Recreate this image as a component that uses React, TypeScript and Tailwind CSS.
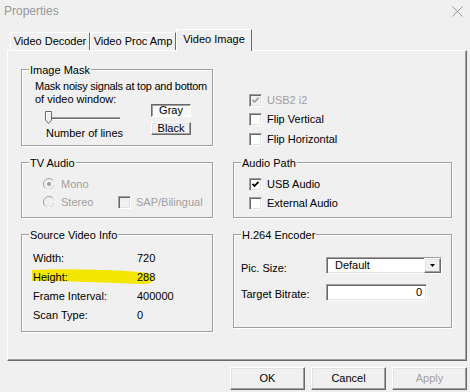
import type { ReactNode } from "react";

const raised =
  "border border-t-white border-l-white border-r-[#696969] border-b-[#696969] shadow-[inset_-1px_-1px_0_#a0a0a0,inset_1px_1px_0_#e3e3e3]";
const sunken =
  "border border-t-[#a0a0a0] border-l-[#a0a0a0] border-r-white border-b-white shadow-[inset_1px_1px_0_#696969,inset_-1px_-1px_0_#e3e3e3]";

function Group({ label, className, children }: { label: string; className: string; children: ReactNode }) {
  return (
    <div className={"relative border border-[#a0a0a0] shadow-[inset_1px_1px_0_#fff,1px_1px_0_#fff] " + className}>
      <span className="absolute -top-[6px] left-[7px] bg-[#f0f0f0] px-[1px]">{label}</span>
      {children}
    </div>
  );
}

function Check({ checked, disabled }: { checked?: boolean; disabled?: boolean }) {
  return (
    <span
      className={
        "flex h-[13px] w-[13px] shrink-0 items-center justify-center " +
        sunken +
        (disabled ? " bg-[#f0f0f0]" : " bg-white")
      }
    >
      {checked && (
        <svg width="9" height="9" viewBox="0 0 9 9">
          <polyline
            points="1.5,3.8 3.5,6 7.5,1.8"
            fill="none"
            stroke={disabled ? "#a0a0a0" : "#000"}
            strokeWidth="1.8"
          />
        </svg>
      )}
    </span>
  );
}

function Radio({ checked }: { checked?: boolean }) {
  return (
    <svg width="12" height="12" viewBox="0 0 12 12" className="shrink-0">
      <circle cx="6" cy="6" r="5.5" fill="#f0f0f0" stroke="#a0a0a0" />
      <path d="M10 2.2 A5.5 5.5 0 0 1 2.2 10" fill="none" stroke="#fff" />
      {checked && <circle cx="6" cy="6" r="2" fill="#a0a0a0" />}
    </svg>
  );
}

function CheckRow({ text, checked, disabled }: { text: string; checked?: boolean; disabled?: boolean }) {
  return (
    <div className="flex h-[14px] items-center gap-[5px]">
      <Check checked={checked} disabled={disabled} />
      <span className={disabled ? "text-[#a0a0a0]" : ""}>{text}</span>
    </div>
  );
}

export default function App() {
  return (
    <div className="flex h-[392px] w-[470px] flex-col overflow-hidden whitespace-nowrap bg-[#f0f0f0] font-['Liberation_Sans',Arial,sans-serif] text-[11px] leading-[13px] text-black">
      {/* title bar */}
      <div className="flex h-[22px] shrink-0 items-center justify-between pl-[4px] pr-[7px]">
        <span className="text-[12px] text-[#999]">Properties</span>
        <svg width="11" height="11" viewBox="0 0 11 11">
          <path d="M0.5 0.5 L10.5 10.5 M10.5 0.5 L0.5 10.5" stroke="#999" strokeWidth="1" />
        </svg>
      </div>

      <div className="flex flex-col pl-[7px] pr-[3px] pt-[7px]">
        {/* tabs */}
        <div className="flex h-[21px] items-end pl-[3px]">
          <div className="flex h-[18px] w-[80px] justify-center border border-b-0 border-t-white border-l-white border-r-[#696969] pt-[2px]">
            Video Decoder
          </div>
          <div className="flex h-[18px] w-[86px] justify-center border border-b-0 border-t-white border-l-white border-r-[#696969] pt-[2px]">
            Video Proc Amp
          </div>
          <div className="relative z-10 -mb-[1px] flex h-[22px] w-[76px] justify-center border border-b-0 border-t-white border-l-white border-r-[#696969] bg-[#f0f0f0] pt-[3px]">
            Video Image
          </div>
        </div>

        {/* panel */}
        <div className="h-[311px] border border-t-white border-l-white border-r-[#696969] border-b-[#696969] pl-[13px] pt-[18px] shadow-[inset_-1px_-1px_0_#a0a0a0]">
          <div className="grid grid-cols-[192px_219px] grid-rows-[77px_56px_98px] gap-x-[20px] gap-y-[16px]">
            <Group label="Image Mask" className="">
              <div className="pl-[13px] pt-[10px]">
                <p className="tracking-[-0.25px]">Mask noisy signals at top and bottom</p>
                <p>of video window:</p>
              </div>
              <div className="-mt-[2px] flex">
                <div className="w-[129px] pl-[23px]">
                  <svg width="78" height="13" viewBox="0 0 78 13" className="mt-[7px] block">
                    <line x1="1" y1="6.5" x2="75" y2="6.5" stroke="#a0a0a0" />
                    <line x1="1" y1="7.5" x2="75" y2="7.5" stroke="#696969" />
                    <line x1="1" y1="8.5" x2="75" y2="8.5" stroke="#fff" />
                    <polygon points="0.5,0.5 6.5,0.5 6.5,9 3.5,12.5 0.5,9" fill="#f0f0f0" stroke="#696969" />
                    <polyline points="1.5,9 1.5,1.5 5.5,1.5" fill="none" stroke="#fff" />
                  </svg>
                  <p className="mt-[3px] pl-[1px]">Number of lines</p>
                </div>
                <div className="flex flex-col gap-[5px]">
                  <div className="flex h-[13px] w-[40px] items-center justify-center border border-t-[#696969] border-l-[#696969] border-r-white border-b-white bg-[#f8f8f8] leading-[11px] shadow-[inset_1px_1px_0_#a0a0a0]">
                    Gray
                  </div>
                  <div className={"flex h-[13px] w-[40px] items-center justify-center leading-[11px] " + raised}>
                    Black
                  </div>
                </div>
              </div>
            </Group>

            <div className="flex flex-col gap-[6px] pl-[16px] pt-[25px]">
              <CheckRow text="USB2 i2" checked disabled />
              <CheckRow text="Flip Vertical" />
              <CheckRow text="Flip Horizontal" />
            </div>

            <Group label="TV Audio" className="">
              <div className="flex flex-col gap-[4px] pl-[21px] pt-[14px] text-[#a0a0a0]">
                <div className="flex h-[14px] items-center gap-[6px]">
                  <Radio checked />
                  <span>Mono</span>
                </div>
                <div className="flex h-[14px] items-center">
                  <div className="flex w-[75px] items-center gap-[6px]">
                    <Radio />
                    <span>Stereo</span>
                  </div>
                  <Check disabled />
                  <span className="ml-[5px]">SAP/Bilingual</span>
                </div>
              </div>
            </Group>

            <Group label="Audio Path" className="">
              <div className="flex flex-col gap-[5px] pl-[15px] pt-[14px]">
                <CheckRow text="USB Audio" checked />
                <CheckRow text="External Audio" />
              </div>
            </Group>

            <Group label="Source Video Info" className="">
              <svg width="124" height="19" viewBox="0 0 124 19" className="absolute left-[10px] top-[33px]">
                <path
                  d="M0,2 C30,0.5 70,1 108,4 Q121,5 121,10.5 Q121,16.5 110,16 C75,14.5 35,13 0,13 Z"
                  fill="#f3e600"
                />
              </svg>
              <div className="relative pl-[11px] pt-[14px] leading-[19px]">
                {[
                  ["Width:", "720"],
                  ["Height:", "288"],
                  ["Frame Interval:", "400000"],
                  ["Scan Type:", "0"],
                ].map(([k, v]) => (
                  <div key={k} className="flex">
                    <span className="w-[104px]">{k}</span>
                    <span>{v}</span>
                  </div>
                ))}
              </div>
            </Group>

            <Group label="H.264 Encoder" className="h-[94px] self-start">
              <div className="flex flex-col gap-[9px] pl-[7px] pt-[22px]">
                <div className="flex">
                  <span className="w-[85px] pt-[5px]">Pic. Size:</span>
                  <div className={"flex h-[17px] w-[116px] bg-white " + sunken}>
                    <span className="flex-1 pl-[8px] pt-[1px]">Default</span>
                    <div className={"flex w-[17px] items-center justify-center bg-[#f0f0f0] " + raised}>
                      <svg width="5" height="3" viewBox="0 0 5 3">
                        <polygon points="0,0 5,0 2.5,3" fill="#000" />
                      </svg>
                    </div>
                  </div>
                </div>
                <div className="flex">
                  <span className="w-[85px] pt-[4px]">Target Bitrate:</span>
                  <div className={"flex h-[17px] w-[101px] items-center justify-end bg-white pr-[4px] " + sunken}>
                    0
                  </div>
                </div>
              </div>
            </Group>
          </div>
        </div>
      </div>

      {/* dialog buttons */}
      <div className="mt-[6px] flex justify-end gap-[6px] pr-[3px]">
        <div className={"flex h-[23px] w-[75px] items-center justify-center " + raised}>OK</div>
        <div className={"flex h-[23px] w-[75px] items-center justify-center " + raised}>Cancel</div>
        <div className={"flex h-[23px] w-[75px] items-center justify-center text-[#a0a0a0] " + raised}>Apply</div>
      </div>
    </div>
  );
}
